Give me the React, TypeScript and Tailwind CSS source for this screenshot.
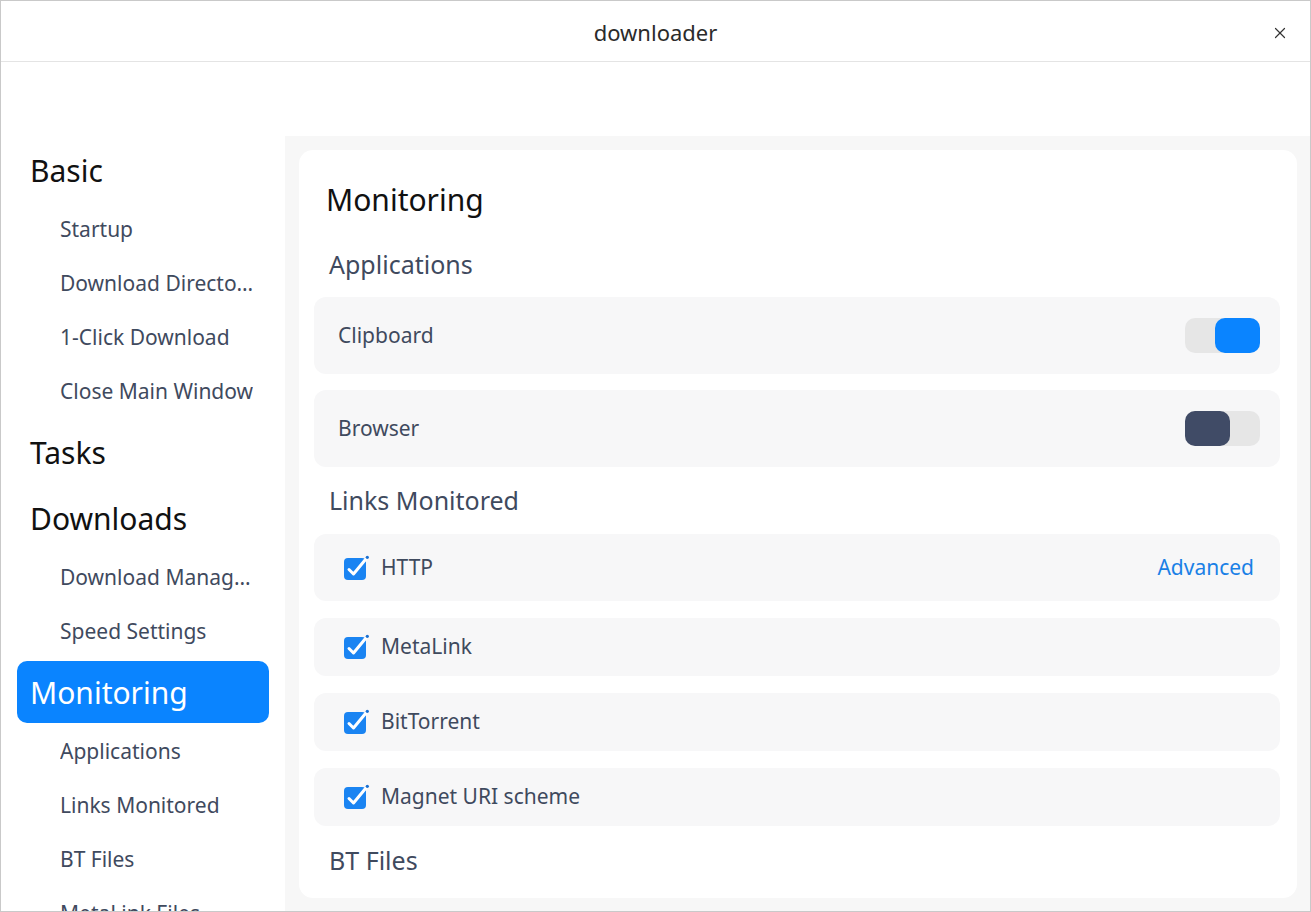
import { X } from 'lucide-react';

const font = { fontFamily: '"Noto Sans", "Open Sans", sans-serif' };

type NavEntry = { label: string; heading?: boolean; active?: boolean };

const nav: NavEntry[] = [
  { label: 'Basic', heading: true },
  { label: 'Startup' },
  { label: 'Download Directory' },
  { label: '1-Click Download' },
  { label: 'Close Main Window' },
  { label: 'Tasks', heading: true },
  { label: 'Downloads', heading: true },
  { label: 'Download Management' },
  { label: 'Speed Settings' },
  { label: 'Monitoring', heading: true, active: true },
  { label: 'Applications' },
  { label: 'Links Monitored' },
  { label: 'BT Files' },
  { label: 'MetaLink Files' },
];

const Toggle = ({ on }: { on: boolean }) => (
  <div className={`flex h-[35px] w-[75px] rounded-[10px] bg-[#e6e6e6] ${on ? 'justify-end' : 'justify-start'}`}>
    <div className={`h-[35px] w-[45px] rounded-[10px] ${on ? 'bg-[#0a84ff]' : 'bg-[#404b66]'}`} />
  </div>
);

const Check = () => (
  <svg width="26" height="26" viewBox="0 0 26 26" className="shrink-0">
    <rect x="0" y="3" width="22" height="22" rx="4" fill="#1a84f2" />
    <path d="M5 14.5 L9.5 19 L21.5 4.5" fill="none" stroke="#ffffff" strokeWidth="3" strokeLinecap="round" strokeLinejoin="round" />
    <circle cx="23.3" cy="2.3" r="1.6" fill="#1a6fd0" />
  </svg>
);

const SectionTitle = ({ children, h, pt = 0 }: { children: string; h: string; pt?: number }) => (
  <div className={`flex items-center pl-[15px] text-[25px] text-[#3f4a5e] ${h}`} style={{ paddingTop: pt }}>
    {children}
  </div>
);

const LinkRow = ({ label, tall, advanced }: { label: string; tall?: boolean; advanced?: boolean }) => (
  <div className={`flex items-center rounded-[12px] bg-[#f7f7f8] pl-[30px] pr-[26px] ${tall ? 'h-[67px]' : 'h-[58px]'}`}>
    <Check />
    <span className="ml-[11px] text-[21px] text-[#3f4a5e]">{label}</span>
    {advanced && <span className="ml-auto text-[21px] text-[#1a80e6]">Advanced</span>}
  </div>
);

export default function App() {
  return (
    <div className="flex h-[912px] w-[1311px] flex-col overflow-hidden border border-[#c9c9c9] bg-white" style={font}>
      {/* title bar */}
      <div className="relative flex h-[61px] shrink-0 items-center justify-center border-b border-[#e4e4e4] pt-[3px]">
        <span className="text-[22px] text-[#2b2b2b]">downloader</span>
        <X className="absolute right-[21px] top-[23px] h-[18px] w-[18px] text-[#333]" strokeWidth={1.6} />
      </div>

      <div className="flex min-h-0 flex-1 pt-[74px]">
        {/* sidebar */}
        <div className="flex w-[284px] shrink-0 flex-col px-[16px]">
          {nav.map((n) =>
            n.heading ? (
              <div
                key={n.label}
                className={`mb-[1px] mt-[3px] flex h-[62px] shrink-0 items-center rounded-[10px] pl-[13px] text-[30px] ${
                  n.active ? 'bg-[#0a84ff] text-white' : 'text-[#111]'
                }`}
              >
                {n.label}
              </div>
            ) : (
              <div key={n.label} className="flex h-[54px] shrink-0 items-center pl-[43px] pr-[14px] pt-[2px] text-[21px] text-[#3f4a5e]">
                <span className="truncate">{n.label}</span>
              </div>
            )
          )}
        </div>

        {/* main */}
        <div className="min-w-0 flex-1 bg-[#f7f7f7] pb-[13px] pl-[14px] pr-[13px] pt-[14px]">
          <div className="flex h-full flex-col overflow-hidden rounded-[14px] bg-white pl-[15px] pr-[17px] pt-[19px]">
            <div className="flex h-[60px] shrink-0 items-center pl-[12px] text-[30px] text-[#111]">Monitoring</div>
            <SectionTitle h="h-[68px] shrink-0" pt={4}>Applications</SectionTitle>

            <div className="flex h-[77px] shrink-0 items-center justify-between rounded-[12px] bg-[#f7f7f8] pl-[24px] pr-[20px]">
              <span className="text-[21px] text-[#3f4a5e]">Clipboard</span>
              <Toggle on />
            </div>
            <div className="mt-[16px] flex h-[77px] shrink-0 items-center justify-between rounded-[12px] bg-[#f7f7f8] pl-[24px] pr-[20px]">
              <span className="text-[21px] text-[#3f4a5e]">Browser</span>
              <Toggle on={false} />
            </div>

            <SectionTitle h="h-[67px] shrink-0">Links Monitored</SectionTitle>
            <div className="flex shrink-0 flex-col gap-[17px]">
              <LinkRow label="HTTP" tall advanced />
              <LinkRow label="MetaLink" />
              <LinkRow label="BitTorrent" />
              <LinkRow label="Magnet URI scheme" />
            </div>
            <SectionTitle h="h-[70px] shrink-0">BT Files</SectionTitle>
          </div>
        </div>
      </div>
    </div>
  );
}
